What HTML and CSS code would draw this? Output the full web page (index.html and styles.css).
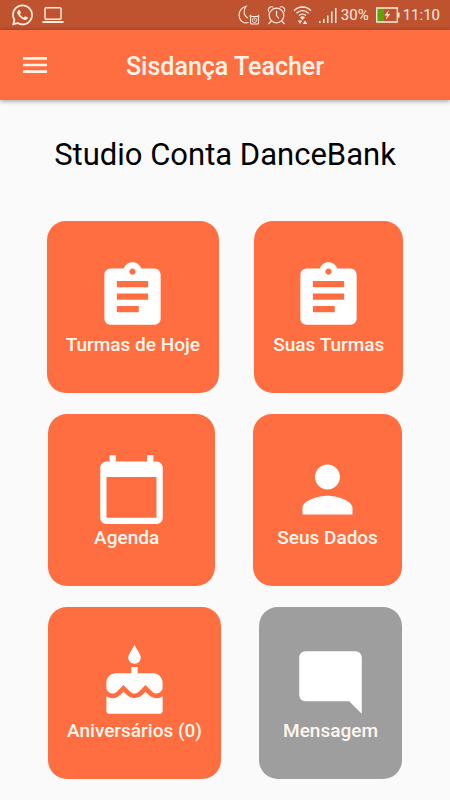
FILE: index.html
```html
<!DOCTYPE html>
<html lang="pt-BR">
<head>
<meta charset="utf-8">
<meta name="viewport" content="width=device-width, initial-scale=1">
<title>Sisdança Teacher</title>
<link rel="stylesheet" href="styles.css">
</head>
<body>
<div class="status-bar">
  <div class="status-group">
    <svg width="21" height="22" viewBox="0 0 24 24" fill="currentColor" aria-hidden="true"><path d="M17.472 14.382c-.297-.149-1.758-.867-2.03-.967-.273-.099-.471-.148-.67.15-.197.297-.767.966-.94 1.164-.173.199-.347.223-.644.075-.297-.15-1.255-.463-2.39-1.475-.883-.788-1.48-1.761-1.653-2.059-.173-.297-.018-.458.13-.606.134-.133.298-.347.446-.52.149-.174.198-.298.298-.497.099-.198.05-.371-.025-.52-.075-.149-.669-1.612-.916-2.207-.242-.579-.487-.5-.669-.51-.173-.008-.371-.01-.57-.01-.198 0-.52.074-.792.372-.272.297-1.04 1.016-1.04 2.479 0 1.462 1.065 2.875 1.213 3.074.149.198 2.096 3.2 5.077 4.487.709.306 1.262.489 1.694.625.712.227 1.36.195 1.871.118.571-.085 1.758-.719 2.006-1.413.248-.694.248-1.289.173-1.413-.074-.124-.272-.198-.57-.347m-5.421 7.403h-.004a9.87 9.87 0 01-5.031-1.378l-.361-.214-3.741.982.998-3.648-.235-.374a9.86 9.86 0 01-1.51-5.26c.001-5.45 4.436-9.884 9.888-9.884 2.64 0 5.122 1.03 6.988 2.898a9.825 9.825 0 012.893 6.994c-.003 5.45-4.437 9.884-9.885 9.884m8.413-18.297A11.815 11.815 0 0012.05 0C5.495 0 .16 5.335.157 11.892c0 2.096.547 4.142 1.588 5.945L.057 24l6.305-1.654a11.882 11.882 0 005.683 1.448h.005c6.554 0 11.89-5.335 11.893-11.893a11.821 11.821 0 00-3.48-8.413z"/></svg>
    <svg width="22" height="18" viewBox="0 0 22 18" fill="none" aria-hidden="true"><rect x="3" y="1.700" width="16" height="11.500" rx="1" stroke="currentColor" stroke-width="1.500"/><path fill="currentColor" d="M0.500 15h21v2h-21z"/></svg>
  </div>
  <div class="status-group status-group-end">
    <svg width="22" height="20" viewBox="0 0 22 20" fill="none" stroke="currentColor" stroke-width="1.100" aria-hidden="true"><path d="M10.500 17.500C5 19.200 1 15.200 1 10.300 1 5.800 4 2 8.200 1.200 4.800 5.500 5.500 10.600 10 13"/><rect x="12.500" y="11.500" width="8" height="7.500" rx="1"/><circle cx="16.500" cy="15.200" r="2.300" stroke-width=".8"/><path stroke-width=".8" d="M16.500 13.800v1.500l.9.600"/><path d="M11.700 11.500l1.500-1.500M21.300 11.500L19.800 10"/></svg>
    <svg width="19" height="20" viewBox="0 0 19 20" fill="none" stroke="currentColor" stroke-width="1.200" stroke-linecap="round" aria-hidden="true"><circle cx="9.500" cy="10.500" r="7.300"/><path d="M9.500 6v4.500l2 2.500M4.300 16l-2.500 2.700M14.700 16l2.500 2.700M1.500 6.200C0.500 3.500 3 1 5.800 2M17.500 6.200c1-2.700-1.500-5.200-4.300-4.200"/></svg>
    <svg width="19" height="20" viewBox="0 0 19 20" fill="none" stroke="currentColor" stroke-width="1.400" aria-hidden="true"><path d="M1 5.700C5.700 0.800 13.300 0.800 18 5.700M3.500 8.200c3.500-3.500 8.500-3.500 12 0M6 10.600c2-2 5-2 7 0"/><path fill="currentColor" stroke="none" d="M9.500 15L7 12.300Q9.500 10.300 12 12.300zM4.700 15.500h4.600L7 19zM9.700 19l2.300-3.500 2.300 3.500z"/></svg>
    <svg width="18" height="18" viewBox="0 0 18 18" fill="currentColor" aria-hidden="true"><path d="M0 15h1.500v2H0zM4 13h1.500v4H4zM8 9.500h1.500V17H8zM12 5.500h1.500V17H12zM16 2h1.500v15H16z"/></svg>
    <span class="battery-level">30%</span>
    <svg width="24" height="16" viewBox="0 0 24 16" aria-hidden="true"><path fill="#5da502" d="M1 1h7v14H1z"/><path fill="none" stroke="currentColor" stroke-width="1.300" d="M.7 1h20.600v14H.7z"/><path fill="currentColor" d="M22 5.500h1.500v5H22zM12.800 3L8.500 8.500h2.600L9.700 13l4.500-6h-2.700z"/></svg>
    <span class="clock">11:10</span>
  </div>
</div>
<header class="app-bar">
  <button class="menu-button" type="button" aria-label="Menu">
    <svg width="32" height="32" viewBox="0 0 24 24" fill="currentColor" aria-hidden="true"><path d="M3 18h18v-2H3v2zm0-5h18v-2H3v2zm0-7v2h18V6H3z"/></svg>
  </button>
  <h1 class="app-title">Sisdança Teacher</h1>
</header>
<main class="content">
  <h2 class="studio-name">Studio Conta DanceBank</h2>
  <div class="card-rows">
    <div class="card-row">
      <button class="card" type="button">
        <svg class="card-icon" viewBox="0 0 24 24" aria-hidden="true"><path d="M19 3h-4.180C14.400 1.840 13.300 1 12 1c-1.300 0-2.400.84-2.820 2H5c-1.100 0-2 .9-2 2v14c0 1.100.9 2 2 2h14c1.100 0 2-.9 2-2V5c0-1.100-.9-2-2-2zm-7 0c.55 0 1 .45 1 1s-.45 1-1 1-1-.45-1-1 .45-1 1-1zm2 14H7v-2h7v2zm3-4H7v-2h10v2zm0-4H7V7h10v2z"/></svg>
        <span>Turmas de Hoje</span>
      </button>
      <button class="card" type="button">
        <svg class="card-icon" viewBox="0 0 24 24" aria-hidden="true"><path d="M19 3h-4.180C14.400 1.840 13.300 1 12 1c-1.300 0-2.400.84-2.820 2H5c-1.100 0-2 .9-2 2v14c0 1.100.9 2 2 2h14c1.100 0 2-.9 2-2V5c0-1.100-.9-2-2-2zm-7 0c.55 0 1 .45 1 1s-.45 1-1 1-1-.45-1-1 .45-1 1-1zm2 14H7v-2h7v2zm3-4H7v-2h10v2zm0-4H7V7h10v2z"/></svg>
        <span>Suas Turmas</span>
      </button>
    </div>
    <div class="card-row">
      <button class="card card-wide-padding" type="button">
        <svg class="card-icon" viewBox="0 0 24 24" aria-hidden="true"><path d="M20 3h-1V1h-2v2H7V1H5v2H4c-1.100 0-2 .9-2 2v16c0 1.100.9 2 2 2h16c1.100 0 2-.9 2-2V5c0-1.100-.9-2-2-2zm0 18H4V8h16v13z"/></svg>
        <span>Agenda</span>
      </button>
      <button class="card card-medium-padding" type="button">
        <svg class="card-icon" viewBox="0 0 24 24" aria-hidden="true"><path d="M12 12c2.210 0 4-1.790 4-4s-1.790-4-4-4-4 1.790-4 4 1.790 4 4 4zm0 2c-2.670 0-8 1.340-8 4v2h16v-2c0-2.660-5.330-4-8-4z"/></svg>
        <span>Seus Dados</span>
      </button>
    </div>
    <div class="card-row">
      <button class="card" type="button">
        <svg class="card-icon" viewBox="0 0 24 24" aria-hidden="true"><path d="M12 6c1.110 0 2-.9 2-2 0-.38-.1-.73-.29-1.030L12 0l-1.710 2.970c-.19.3-.29.65-.29 1.030 0 1.100.9 2 2 2zm4.600 9.990l-1.070-1.070-1.080 1.070c-1.300 1.300-3.580 1.310-4.890 0l-1.070-1.070-1.090 1.070C6.750 16.640 5.880 17 4.960 17c-.73 0-1.400-.23-1.960-.61V21c0 .55.45 1 1 1h16c.55 0 1-.45 1-1v-4.610c-.56.38-1.230.61-1.960.61-.92 0-1.790-.36-2.440-1.010zM18 9h-5V7h-2v2H6c-1.660 0-3 1.340-3 3v1.540c0 1.080.88 1.960 1.960 1.960.52 0 1.020-.2 1.380-.57l2.140-2.130 2.130 2.130c.74.74 2.030.74 2.770 0l2.140-2.130 2.130 2.130c.37.37.86.57 1.380.57 1.080 0 1.960-.88 1.960-1.960V12c0-1.660-1.340-3-3-3z"/></svg>
        <span>Aniversários (0)</span>
      </button>
      <button class="card card-medium-padding card-muted" type="button">
        <svg class="card-icon" viewBox="0 0 24 24" aria-hidden="true"><path d="M22 4c0-1.100-.9-2-2-2H4c-1.100 0-2 .9-2 2v12c0 1.100.9 2 2 2h14l4 4V4z"/></svg>
        <span>Mensagem</span>
      </button>
    </div>
  </div>
</main>
</body>
</html>
```
FILE: styles.css
```css
* {
  box-sizing: border-box;
}

body {
  margin: 0;
  background: #fafafa;
  color: #000;
  font-family: Roboto, "Liberation Sans", sans-serif;
}

svg {
  display: block;
  flex: none;
}

button {
  border: 0;
  padding: 0;
  background: none;
  color: inherit;
  font: inherit;
  cursor: pointer;
}

.status-bar {
  display: flex;
  align-items: center;
  justify-content: space-between;
  height: 30px;
  padding: 0 10px 0 12px;
  background: #bf5330;
  color: #ffece0;
  font-size: 15px;
  line-height: 30px;
}

.status-group {
  display: flex;
  align-items: center;
  gap: 9px;
}

.status-group-end {
  gap: 7px;
}

.battery-level {
  margin: 0 0 0 -3px;
}

.clock {
  margin-left: -4px;
}

.app-bar {
  display: grid;
  grid-template-columns: 70px 1fr 70px;
  align-items: center;
  height: 70px;
  background: #ff6e40;
  color: #fff3ea;
  box-shadow: 0 1px 5px rgba(0, 0, 0, 0.4);
}

.menu-button {
  display: flex;
  justify-content: center;
}

.app-title {
  margin: 0;
  padding-top: 3px;
  font-size: 25px;
  font-weight: 500;
  line-height: 30px;
  text-align: center;
}

.content {
  padding: 35px 29px 20px;
}

.studio-name {
  margin: 0 0 46px;
  font-size: 31px;
  font-weight: 400;
  line-height: 40px;
  text-align: center;
}

.card-rows {
  display: flex;
  flex-direction: column;
  gap: 21px;
}

.card-row {
  display: flex;
  justify-content: space-around;
}

.card {
  display: grid;
  justify-items: start;
  padding: 38px 19px 37px;
  border-radius: 19px;
  background: #ff6e40;
  color: #fff6ee;
  font-size: 19px;
  font-weight: 500;
  line-height: 22px;
}

.card-medium-padding {
  padding-left: 24px;
  padding-right: 24px;
}

.card-wide-padding {
  padding-left: 46px;
  padding-right: 46px;
}

.card-muted {
  background: #9e9e9e;
}

.card-icon {
  width: 75px;
  height: 75px;
  justify-self: center;
  fill: #fff;
}
```
